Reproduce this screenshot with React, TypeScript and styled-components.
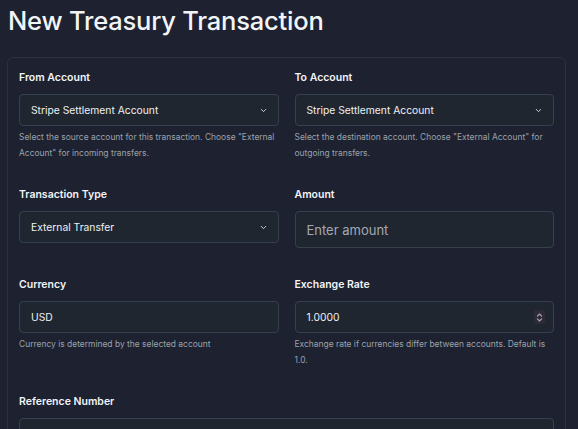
import React from 'react';
import styled, {createGlobalStyle} from 'styled-components';

const GlobalStyle = createGlobalStyle`
	html, body {
		margin: 0;
		padding: 0;
		background: #1d2130;
	}
	body {
		font-family: Inter, 'Noto Sans', sans-serif;
		color: #eef0f3;
	}
	* {
		box-sizing: border-box;
	}
`;

const Page = styled.div`
	padding: 6px 12px 0 7px;
	height: 429px;
	overflow: hidden;
`;
const Title = styled.h1`
	margin: 0 0 21px 1px;
	font-size: 25.5px;
	line-height: 30px;
	font-weight: 500;
	letter-spacing: -0.2px;
	color: #f2f4f7;
`;
const Card = styled.div`
	border: 1px solid #2b3142;
	border-radius: 6px;
	padding: 12px 11px 20px 11px;
	background: #1d2130;
`;
const Grid = styled.div`
	display: grid;
	grid-template-columns: 1fr 1fr;
	column-gap: 16px;
	row-gap: 26px;
`;
const Field = styled.div<{full?: boolean}>`
	display: flex;
	flex-direction: column;
	grid-column: ${(p) => (p.full ? '1 / -1' : 'auto')};
`;
const Label = styled.label`
	font-size: 10.5px;
	line-height: 16px;
	font-weight: 600;
	color: #f2f4f7;
	margin-bottom: 8px;
`;
const Control = styled.div<{tall?: boolean}>`
	display: flex;
	align-items: center;
	justify-content: space-between;
	height: ${(p) => (p.tall ? '37px' : '32px')};
	padding: 0 10px 0 11px;
	background: #20262f;
	border: 1px solid #364150;
	border-radius: 4px;
	font-size: ${(p) => (p.tall ? '13px' : '10.3px')};
	color: #eef0f3;
`;
const Placeholder = styled.span`
	color: #a3a9b2;
`;
const Help = styled.div`
	margin-top: 3px;
	font-size: 8.45px;
	line-height: 16px;
	color: #9ba1aa;
`;
const Spacer = styled.div`
	margin-top: 3px;
`;
const Spinner = styled.span`
	display: flex;
	align-items: center;
	justify-content: center;
	width: 11px;
	height: 14px;
	margin-right: -2px;
	background: #2c2b36;
	border-radius: 2px;
`;

const Chevron = () => (
	<svg width="9" height="9" viewBox="0 0 24 24" fill="none" stroke="#d6d9de" strokeWidth="2.5" strokeLinecap="round" strokeLinejoin="round">
		<path d="m6 9 6 6 6-6" />
	</svg>
);

const UpDown = () => (
	<svg width="7" height="11" viewBox="0 0 10 16" fill="none" stroke="#a6a3b0" strokeWidth="1.8" strokeLinecap="round" strokeLinejoin="round">
		<path d="M2 6 5 3l3 3M2 10l3 3 3-3" />
	</svg>
);

function App() {
	return (
		<Page>
			<GlobalStyle />
			<Title>New Treasury Transaction</Title>
			<Card>
				<Grid>
					<Field>
						<Label>From Account</Label>
						<Control>
							<span>Stripe Settlement Account</span>
							<Chevron />
						</Control>
						<Help>Select the source account for this transaction. Choose "External Account" for incoming transfers.</Help>
					</Field>
					<Field>
						<Label>To Account</Label>
						<Control>
							<span>Stripe Settlement Account</span>
							<Chevron />
						</Control>
						<Help>Select the destination account. Choose "External Account" for outgoing transfers.</Help>
					</Field>
					<Field>
						<Label>Transaction Type</Label>
						<Control>
							<span>External Transfer</span>
							<Chevron />
						</Control>
					</Field>
					<Field>
						<Label>Amount</Label>
						<Control tall>
							<Placeholder>Enter amount</Placeholder>
						</Control>
						<Spacer />
					</Field>
					<Field>
						<Label>Currency</Label>
						<Control>
							<span>USD</span>
						</Control>
						<Help>Currency is determined by the selected account</Help>
					</Field>
					<Field>
						<Label>Exchange Rate</Label>
						<Control>
							<span>1.0000</span>
							<Spinner>
								<UpDown />
							</Spinner>
						</Control>
						<Help>Exchange rate if currencies differ between accounts. Default is 1.0.</Help>
					</Field>
					<Field full>
						<Label>Reference Number</Label>
						<Control tall />
					</Field>
				</Grid>
			</Card>
		</Page>
	);
}

export default App;
